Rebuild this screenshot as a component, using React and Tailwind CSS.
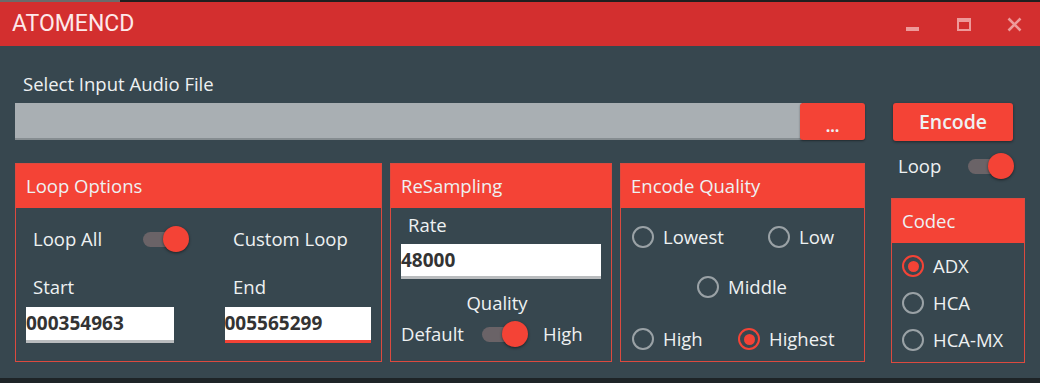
import React from "react";

const FONT = { fontFamily: '"Open Sans", "Noto Sans", sans-serif' };

function Toggle() {
  return (
    <div className="relative w-[46px] h-[26px] shrink-0">
      <div className="absolute left-0 top-[6px] w-[38px] h-[15px] rounded-full bg-[#6a6367]" />
      <div className="absolute right-0 top-0 w-[26px] h-[26px] rounded-full bg-[#f44336] shadow-[0_1px_3px_rgba(0,0,0,0.5)]" />
    </div>
  );
}

function Radio({ checked, label }) {
  return (
    <div className="flex items-center gap-[9px] h-[26px]">
      {checked ? (
        <div className="w-[22px] h-[22px] rounded-full border-2 border-[#f44336] flex items-center justify-center">
          <div className="w-[11px] h-[11px] rounded-full bg-[#f44336]" />
        </div>
      ) : (
        <div className="w-[22px] h-[22px] rounded-full border-2 border-[#9aa2a6]" />
      )}
      <span>{label}</span>
    </div>
  );
}

function Panel({ title, className, children }) {
  return (
    <div className={`border border-[#dc4a3f] flex flex-col ${className}`}>
      <div className="h-[44px] bg-[#f44336] flex items-center px-[10px] shrink-0">
        {title}
      </div>
      <div className="flex-1">{children}</div>
    </div>
  );
}

function Field({ value, underline }) {
  return (
    <div
      className={`h-[36px] bg-white flex items-center text-[19px] font-bold text-[#333] border-b-[3px] ${
        underline ? "border-[#f44336]" : "border-[#b9bcbe]"
      }`}
    >
      {value}
    </div>
  );
}

export default function App() {
  return (
    <div className="w-[1040px] h-[383px] flex flex-col bg-[#37474f] text-[#eef1f2] overflow-hidden" style={FONT}>
      {/* top strip */}
      <div className="h-[2px] flex shrink-0">
        <div className="w-[120px] bg-[#6b6b6b]" />
        <div className="flex-1 bg-[#1f1f1f]" />
      </div>

      {/* title bar */}
      <div className="h-[44px] bg-[#d32f2f] flex items-center justify-between shrink-0">
        <span
          className="pl-[12px] text-[23px] text-[#fde9ea]"
          style={{ fontFamily: "Roboto, sans-serif" }}
        >
          ATOMENCD
        </span>
        <div className="flex items-center">
          <div className="w-[51px] flex justify-center">
            <div className="w-[13px] h-[4px] bg-[#ee9a9a] mt-[10px]" />
          </div>
          <div className="w-[51px] flex justify-center">
            <div className="w-[14px] h-[13px] border-2 border-t-[4px] border-[#ee9a9a]" />
          </div>
          <div className="w-[51px] flex justify-center">
            <svg width="15" height="15" viewBox="0 0 15 15">
              <path d="M1.5 1.5L13.5 13.5M13.5 1.5L1.5 13.5" stroke="#ee9a9a" strokeWidth="2.6" />
            </svg>
          </div>
        </div>
      </div>

      {/* body */}
      <div className="flex-1 px-[15px] pt-[26px] text-[18.5px]">
        <div className="h-[24px] pl-[8px] leading-[24px]">Select Input Audio File</div>

        <div className="flex mt-[7px]">
          {/* left column */}
          <div className="w-[850px] flex flex-col">
            <div className="flex h-[37px]">
              <div className="flex-1 bg-[#a9afb3] border-b-2 border-[#868d91]" />
              <div className="w-[65px] bg-[#f44336] rounded-[3px] -ml-[2px] flex items-end justify-center pb-[6px] text-[16px] font-bold leading-none shadow-[0_1px_2px_rgba(0,0,0,0.4)]">
                ...
              </div>
            </div>

            <div className="flex mt-[23px] h-[199px]">
              {/* Loop Options */}
              <Panel title="Loop Options" className="w-[367px]">
                <div className="px-[10px]">
                  <div className="flex mt-[18px] h-[26px] items-center">
                    <div className="w-[199px] flex items-center">
                      <span className="pl-[7px] w-[117px]">Loop All</span>
                      <Toggle />
                    </div>
                    <span className="pl-[8px]">Custom Loop</span>
                  </div>
                  <div className="flex mt-[22px] h-[26px] items-center">
                    <span className="w-[199px] pl-[7px]">Start</span>
                    <span className="pl-[8px]">End</span>
                  </div>
                  <div className="flex mt-[7px]">
                    <div className="w-[148px]">
                      <Field value="000354963" />
                    </div>
                    <div className="w-[147px] ml-[51px]">
                      <Field value="005565299" underline />
                    </div>
                  </div>
                </div>
              </Panel>

              {/* ReSampling */}
              <Panel title="ReSampling" className="w-[222px] ml-[8px]">
                <div className="px-[10px]">
                  <div className="h-[26px] mt-[4px] pl-[7px] flex items-center">Rate</div>
                  <div className="mt-[6px] w-[200px]">
                    <div className="h-[35px] bg-white flex items-center text-[19px] font-bold text-[#333] border-b-[3px] border-[#b9bcbe]">
                      48000
                    </div>
                  </div>
                  <div className="mt-[11px] h-[26px] flex items-center justify-center pr-[8px]">Quality</div>
                  <div className="mt-[4px] h-[27px] flex items-center">
                    <span className="w-[81px]">Default</span>
                    <Toggle />
                    <span className="ml-[15px]">High</span>
                  </div>
                </div>
              </Panel>

              {/* Encode Quality */}
              <Panel title="Encode Quality" className="w-[246px] ml-[8px]">
                <div className="pl-[11px]">
                  <div className="flex mt-[16px]">
                    <div className="w-[136px]">
                      <Radio label="Lowest" />
                    </div>
                    <Radio label="Low" />
                  </div>
                  <div className="flex mt-[24px] pl-[65px]">
                    <Radio label="Middle" />
                  </div>
                  <div className="flex mt-[26px]">
                    <div className="w-[106px]">
                      <Radio label="High" />
                    </div>
                    <Radio checked label="Highest" />
                  </div>
                </div>
              </Panel>
            </div>
          </div>

          {/* right column */}
          <div className="ml-[26px] w-[135px] flex flex-col">
            <div className="ml-[2px] w-[120px] h-[38px] bg-[#f44336] rounded-[3px] flex items-center justify-center text-[19.5px] font-semibold shadow-[0_1px_3px_rgba(0,0,0,0.45)]">
              Encode
            </div>
            <div className="mt-[12px] h-[26px] flex items-center">
              <span className="pl-[7px] w-[77px]">Loop</span>
              <Toggle />
            </div>
            <Panel title="Codec" className="mt-[19px] h-[165px]">
              <div className="pl-[10px] flex flex-col gap-[11px] pt-[10px]">
                <Radio checked label="ADX" />
                <Radio label="HCA" />
                <Radio label="HCA-MX" />
              </div>
            </Panel>
          </div>
        </div>
      </div>

      {/* bottom strip */}
      <div className="h-[5px] bg-[#1e2427] shrink-0" />
    </div>
  );
}
